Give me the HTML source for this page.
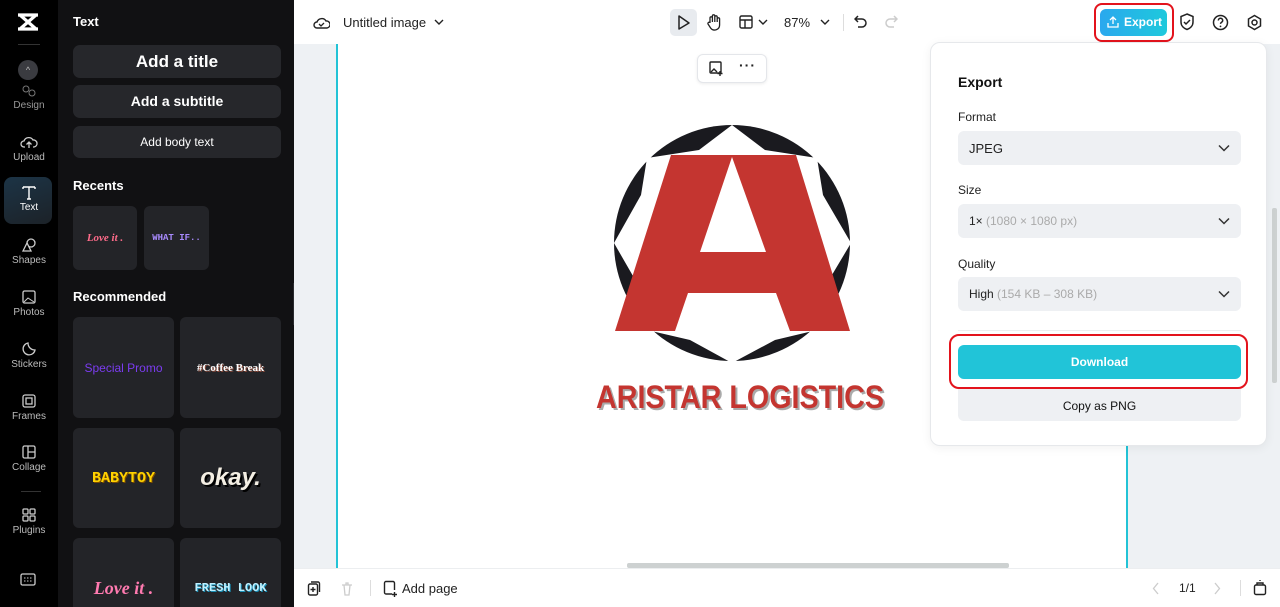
<!DOCTYPE html>
<html><head><meta charset="utf-8"><style>
*{box-sizing:border-box;margin:0;padding:0}
html,body{width:1280px;height:607px;overflow:hidden}
body{font-family:"Liberation Sans",sans-serif;background:#fff;position:relative}
.abs{position:absolute}
.rail{left:0;top:0;width:58px;height:607px;background:#000}
.ri{position:absolute;left:0;width:58px;text-align:center;color:#bbb;font-size:10px}
.ri svg{display:block;margin:0 auto 2px}
.panel{left:58px;top:0;width:236px;height:607px;background:#111113;overflow:hidden}
.btn{position:absolute;left:15px;width:208px;background:#26272b;border-radius:7px;color:#fff;text-align:center;font-weight:bold}
.card{position:absolute;background:#232428;border-radius:6px;display:flex;align-items:center;justify-content:center}
.h{position:absolute;left:15px;color:#fff;font-weight:bold;font-size:13px}
.canvas{left:294px;top:44px;width:986px;height:524px;background:#eef1f4}
.page{left:336px;top:44px;width:792px;height:524px;background:#fff;border-left:2px solid #22c3d6;border-right:2px solid #22c3d6}
.sel{background:#eef0f3;border-radius:6px;height:36px;display:flex;align-items:center;padding:0 11px;font-size:13px;color:#222;position:absolute;left:27px;width:283px;justify-content:space-between}
.lab{position:absolute;left:27px;font-size:12px;color:#222}
.g{color:#aaa}
</style></head><body>
<div class="abs rail">
 <svg class="abs" style="left:16px;top:12px" width="24" height="20" viewBox="0 0 24 20"><path d="M2 3h20M2 17h20M4 3l16 14M20 3L4 17" stroke="#fff" stroke-width="3.2" fill="none"/></svg>
 <div class="abs" style="left:18px;top:44px;width:22px;height:1px;background:#333"></div>
 <div class="abs" style="left:18px;top:60px;width:20px;height:20px;border-radius:50%;background:#3a3b40;color:#bbb;font-size:9px;text-align:center;line-height:20px">^</div>
 <div class="ri" style="top:84px"><svg width="16" height="14"><circle cx="5" cy="5" r="3" stroke="#777" fill="none"/><circle cx="11" cy="9" r="3" stroke="#777" fill="none"/></svg><span style="color:#999">Design</span></div>
 <div class="ri" style="top:134px"><svg width="18" height="16" viewBox="0 0 18 16"><path d="M5 13H4a3 3 0 010-6 5 5 0 019-1 3.5 3.5 0 011 7h-1M9 14V8M6.5 10.5L9 8l2.5 2.5" stroke="#ccc" stroke-width="1.3" fill="none"/></svg>Upload</div>
 <div class="abs" style="left:4px;top:177px;width:48px;height:47px;border-radius:8px;background:linear-gradient(160deg,#1c3446,#1c2228)"></div>
 <div class="ri" style="top:184px;color:#fff"><svg width="16" height="16" viewBox="0 0 16 16"><path d="M2 3h12M8 3v12M2 3v2M14 3v2M6 15h4" stroke="#fff" stroke-width="1.4" fill="none"/></svg>Text</div>
 <div class="ri" style="top:237px"><svg width="16" height="16"><circle cx="10" cy="6" r="4" stroke="#ccc" fill="none" stroke-width="1.3"/><path d="M2 14L6 6l4 8z" stroke="#ccc" fill="#000" stroke-width="1.3"/></svg>Shapes</div>
 <div class="ri" style="top:289px"><svg width="16" height="16"><rect x="2" y="2" width="12" height="12" rx="1.5" stroke="#ccc" fill="none" stroke-width="1.3"/><path d="M3 13l4-4 6 4" stroke="#ccc" fill="none"/></svg>Photos</div>
 <div class="ri" style="top:341px"><svg width="16" height="16"><path d="M14 9A6 6 0 117 2c0 4 3 7 7 7z" stroke="#ccc" fill="none" stroke-width="1.3"/></svg>Stickers</div>
 <div class="ri" style="top:393px"><svg width="16" height="16"><rect x="2" y="2" width="12" height="12" rx="2" stroke="#ccc" fill="none" stroke-width="1.3"/><rect x="5" y="5" width="6" height="6" stroke="#ccc" fill="none" stroke-width="1.3"/></svg>Frames</div>
 <div class="ri" style="top:444px"><svg width="16" height="16"><rect x="2" y="2" width="12" height="12" rx="1.5" stroke="#ccc" fill="none" stroke-width="1.3"/><path d="M7 2v12M7 8h7" stroke="#ccc" stroke-width="1.3"/></svg>Collage</div>
 <div class="abs" style="left:21px;top:491px;width:20px;height:1px;background:#333"></div>
 <div class="ri" style="top:507px"><svg width="16" height="16"><rect x="2" y="2" width="5" height="5" rx="1" stroke="#ccc" fill="none" stroke-width="1.3"/><rect x="9" y="2" width="5" height="5" rx="1" stroke="#ccc" fill="none" stroke-width="1.3"/><rect x="2" y="9" width="5" height="5" rx="1" stroke="#ccc" fill="none" stroke-width="1.3"/><rect x="9" y="9" width="5" height="5" rx="1" stroke="#ccc" fill="none" stroke-width="1.3"/></svg>Plugins</div>
 <svg class="abs" style="left:20px;top:573px" width="16" height="14"><rect x="1" y="1" width="14" height="11" rx="1.5" stroke="#ccc" fill="none" stroke-width="1.3"/><path d="M4 5h8M4 8h8" stroke="#ccc" stroke-dasharray="1.5 1.5"/></svg>
</div>
<div class="abs panel">
 <div class="h" style="top:14px">Text</div>
 <div class="btn" style="top:45px;height:33px;line-height:33px;font-size:17px">Add a title</div>
 <div class="btn" style="top:85px;height:33px;line-height:33px;font-size:14px">Add a subtitle</div>
 <div class="btn" style="top:126px;height:32px;line-height:32px;font-size:12px;font-weight:normal">Add body text</div>
 <div class="h" style="top:178px">Recents</div>
 <div class="card" style="left:15px;top:206px;width:64px;height:64px;color:#ff6b8a;font:italic bold 11px 'Liberation Serif',serif">Love it .</div>
 <div class="card" style="left:86px;top:206px;width:65px;height:64px;color:#a98bff;font:bold 9px 'Liberation Mono',monospace">WHAT IF..</div>
 <div class="h" style="top:289px">Recommended</div>
 <div class="card" style="left:15px;top:317px;width:101px;height:101px;color:#7b3cf0;font-size:12px">Special Promo</div>
 <div class="card" style="left:122px;top:317px;width:101px;height:101px;color:#fff;font:bold 11px 'Liberation Serif',serif;text-shadow:1px 1px 0 #8a4a3a">#Coffee Break</div>
 <div class="card" style="left:15px;top:428px;width:101px;height:100px;color:#ffd200;font:bold 15px 'Liberation Mono',monospace;text-shadow:1px 1px 0 #7a4b00">BABYTOY</div>
 <div class="card" style="left:122px;top:428px;width:101px;height:100px;color:#f4efe4;font:italic bold 24px 'Liberation Sans',sans-serif;text-shadow:2px 2px 0 #000">okay.</div>
 <div class="card" style="left:15px;top:538px;width:101px;height:80px;color:#ff7ab0;font:italic bold 18px 'Liberation Serif',serif;padding-top:20px">Love it .</div>
 <div class="card" style="left:122px;top:538px;width:101px;height:80px;color:#bff0ff;font:bold 12px 'Liberation Mono',monospace;text-shadow:1px 1px 0 #1a8fb5;padding-top:20px">FRESH LOOK</div>
</div>
<div class="abs" style="left:293px;top:283px;width:6px;height:42px;background:#2a2b2f;border-radius:0 4px 4px 0"></div>
<!-- top bar -->
<svg class="abs" style="left:313px;top:14px" width="17" height="16" viewBox="0 0 17 16"><path d="M5 14H4a3 3 0 010-6 5 5 0 019-1 3.5 3.5 0 011 7H5z" stroke="#222" stroke-width="1.4" fill="none"/><path d="M6 10l2 2 3-3" stroke="#222" stroke-width="1.3" fill="none"/></svg>
<div class="abs" style="left:343px;top:15px;font-size:13px;color:#222">Untitled image</div>
<svg class="abs" style="left:434px;top:18px" width="10" height="8"><path d="M1 2l4 4 4-4" stroke="#222" stroke-width="1.4" fill="none"/></svg>
<div class="abs" style="left:670px;top:9px;width:27px;height:27px;background:#e8ebef;border-radius:5px"></div>
<svg class="abs" style="left:677px;top:14px" width="14" height="17"><path d="M2 2l10 7-10 6z" stroke="#222" stroke-width="1.5" fill="none" stroke-linejoin="round"/></svg>
<svg class="abs" style="left:706px;top:13px" width="16" height="18"><path d="M4 10V5a1.2 1.2 0 012.4 0V9V3a1.2 1.2 0 012.4 0v6V4a1.2 1.2 0 012.4 0v5-3a1.2 1.2 0 012.4 0v6a5 5 0 01-9 3L2 11a1.3 1.3 0 012-1.5z" stroke="#222" stroke-width="1.3" fill="none"/></svg>
<svg class="abs" style="left:739px;top:15px" width="14" height="14"><rect x="1" y="1" width="12" height="12" rx="1.5" stroke="#222" stroke-width="1.4" fill="none"/><path d="M1 5h12M6 5v8" stroke="#222" stroke-width="1.4"/></svg>
<svg class="abs" style="left:758px;top:18px" width="10" height="8"><path d="M1 2l4 4 4-4" stroke="#222" stroke-width="1.4" fill="none"/></svg>
<div class="abs" style="left:784px;top:15px;font-size:13px;color:#222">87%</div>
<svg class="abs" style="left:820px;top:18px" width="10" height="8"><path d="M1 2l4 4 4-4" stroke="#222" stroke-width="1.4" fill="none"/></svg>
<div class="abs" style="left:843px;top:14px;width:1px;height:17px;background:#ddd"></div>
<svg class="abs" style="left:854px;top:14px" width="14" height="16"><path d="M4 2L1 5l3 3M1 5h7a4 4 0 010 8H4" stroke="#222" stroke-width="1.5" fill="none"/></svg>
<svg class="abs" style="left:884px;top:14px" width="14" height="16"><path d="M10 2l3 3-3 3M13 5H6a4 4 0 000 8h4" stroke="#ccc" stroke-width="1.5" fill="none"/></svg>
<div class="abs" style="left:1094px;top:3px;width:80px;height:39px;border:2.5px solid #e3131c;border-radius:8px"></div>
<div class="abs" style="left:1100px;top:9px;width:67px;height:27px;border-radius:6px;background:linear-gradient(90deg,#2aa8ee,#1ec9dc);color:#fff;font-size:12px;font-weight:bold;line-height:27px;padding-left:24px">Export</div>
<svg class="abs" style="left:1107px;top:16px" width="12" height="12"><path d="M6 8V1M3 4l3-3 3 3M1 7v4h10V7" stroke="#fff" stroke-width="1.3" fill="none"/></svg>
<svg class="abs" style="left:1179px;top:13px" width="16" height="18"><path d="M8 1l6 2.5V9c0 4-3 6.5-6 7.5C5 15.5 2 13 2 9V3.5z" stroke="#222" stroke-width="1.5" fill="none"/><path d="M5 9l2 2 4-4" stroke="#222" stroke-width="1.5" fill="none"/></svg>
<svg class="abs" style="left:1212px;top:14px" width="17" height="17"><circle cx="8.5" cy="8.5" r="7" stroke="#222" stroke-width="1.5" fill="none"/><path d="M6.3 6.5a2.2 2.2 0 114 1.2c-.8.6-1.8 1-1.8 2.2" stroke="#222" stroke-width="1.5" fill="none"/><circle cx="8.5" cy="12.4" r=".9" fill="#222"/></svg>
<svg class="abs" style="left:1246px;top:14px" width="17" height="17"><path d="M8.5 1.5l6 3.5v7l-6 3.5-6-3.5V5z" stroke="#222" stroke-width="1.5" fill="none"/><circle cx="8.5" cy="8.5" r="2.5" stroke="#222" stroke-width="1.5" fill="none"/></svg>
<!-- canvas -->
<div class="abs canvas"></div>
<div class="abs page"></div>
<div class="abs" style="left:697px;top:54px;width:70px;height:29px;background:#fff;border:1px solid #e4e6ea;border-radius:6px;box-shadow:0 1px 3px rgba(0,0,0,.08)"></div>
<svg class="abs" style="left:709px;top:61px" width="15" height="15"><rect x="1" y="1" width="11" height="11" rx="1" stroke="#222" stroke-width="1.4" fill="none"/><path d="M2 11l3-3 3 3M11 10v5M8.5 12.5h5" stroke="#222" stroke-width="1.4" fill="none"/></svg>
<div class="abs" style="left:739px;top:57px;font-size:14px;font-weight:bold;color:#222;letter-spacing:1px">···</div>
<!-- logo -->
<svg class="abs" style="left:590px;top:115px" width="300" height="310" viewBox="590 115 300 310">
 <circle cx="732" cy="243" r="118" fill="#1a1a1f"/>
 <polygon fill="#fff" points="732,125 765,150 817,158 823,195 851,243 823,290 817,330 775,340 732,363 690,340 647,330 641,290 614,243 641,195 647,158 699,150"/>
 <polygon fill="#c43530" points="671,155 796,155 850,331 790,331 776,293 688,293 675,331 615,331"/>
 <polygon fill="#fff" points="732,157 766,252 700,252"/>
 <text x="598" y="410" textLength="288" lengthAdjust="spacingAndGlyphs" font-family="Liberation Sans" font-weight="bold" font-size="32" fill="#aaa">ARISTAR LOGISTICS</text>
 <text x="596" y="408" textLength="288" lengthAdjust="spacingAndGlyphs" font-family="Liberation Sans" font-weight="bold" font-size="32" fill="#c43530">ARISTAR LOGISTICS</text>
</svg>
<div class="abs" style="left:627px;top:563px;width:382px;height:5px;background:#cdd1d1;border-radius:2px"></div>
<div class="abs" style="left:1272px;top:208px;width:5px;height:175px;background:#cdd1d1;border-radius:2px"></div>
<!-- export panel -->
<div class="abs" style="left:930px;top:42px;width:337px;height:404px;background:#fff;border:1px solid #e6e8eb;border-radius:10px;box-shadow:0 2px 10px rgba(0,0,0,.06)">
 <div class="abs" style="left:27px;top:31px;font-size:14px;font-weight:bold;color:#111">Export</div>
 <div class="lab" style="top:67px">Format</div>
 <div class="sel" style="top:88px;height:34px"><span>JPEG</span><svg width="12" height="8"><path d="M1 1.5l5 5 5-5" stroke="#333" stroke-width="1.5" fill="none"/></svg></div>
 <div class="lab" style="top:140px">Size</div>
 <div class="sel" style="top:161px;height:34px;font-size:12px"><span>1× <span class="g">(1080 × 1080 px)</span></span><svg width="12" height="8"><path d="M1 1.5l5 5 5-5" stroke="#333" stroke-width="1.5" fill="none"/></svg></div>
 <div class="lab" style="top:214px">Quality</div>
 <div class="sel" style="top:234px;height:34px;font-size:12px"><span>High <span class="g">(154 KB – 308 KB)</span></span><svg width="12" height="8"><path d="M1 1.5l5 5 5-5" stroke="#333" stroke-width="1.5" fill="none"/></svg></div>
 <div class="abs" style="left:27px;top:287px;width:283px;height:1px;background:#eceef0"></div>
 <div class="abs" style="left:27px;top:345px;width:283px;height:33px;background:#eef0f3;border-radius:0 0 6px 6px;text-align:center;line-height:36px;font-size:12px;color:#111">Copy as PNG</div>
 <div class="abs" style="left:18px;top:291px;width:299px;height:55px;border:2.5px solid #e3131c;border-radius:10px;background:#fff"></div>
 <div class="abs" style="left:27px;top:302px;width:283px;height:34px;background:#21c4d8;border-radius:6px;text-align:center;line-height:34px;font-size:12px;font-weight:bold;color:#fff">Download</div>
</div>
<!-- bottom bar -->
<div class="abs" style="left:294px;top:568px;width:986px;height:39px;background:#fff;border-top:1px solid #eceef0"></div>
<svg class="abs" style="left:307px;top:580px" width="14" height="16"><rect x="1.5" y="4" width="9" height="11" rx="1.5" stroke="#222" stroke-width="1.4" fill="none"/><path d="M4 2h7a1.5 1.5 0 011.5 1.5V12M6 7v5M3.5 9.5h5" stroke="#222" stroke-width="1.4" fill="none"/></svg>
<svg class="abs" style="left:341px;top:581px" width="12" height="15"><path d="M1 4h10M3 4l1 10h4l1-10M5 4V2h2v2" stroke="#ccc" stroke-width="1.3" fill="none"/></svg>
<div class="abs" style="left:370px;top:580px;width:1px;height:16px;background:#ddd"></div>
<svg class="abs" style="left:383px;top:580px" width="15" height="17"><path d="M9 14H3a1.5 1.5 0 01-1.5-1.5V3A1.5 1.5 0 013 1.5h7A1.5 1.5 0 0111.5 3v7M11.5 12v5M9 14.5h5" stroke="#222" stroke-width="1.4" fill="none"/></svg>
<div class="abs" style="left:402px;top:581px;font-size:13px;color:#222">Add page</div>
<svg class="abs" style="left:1152px;top:582px" width="8" height="13"><path d="M6 1L1.5 6.5 6 12" stroke="#ccc" stroke-width="1.3" fill="none"/></svg>
<div class="abs" style="left:1179px;top:581px;font-size:12px;color:#222">1/1</div>
<svg class="abs" style="left:1213px;top:582px" width="8" height="13"><path d="M2 1l4.5 5.5L2 12" stroke="#ccc" stroke-width="1.3" fill="none"/></svg>
<div class="abs" style="left:1240px;top:580px;width:1px;height:16px;background:#ddd"></div>
<svg class="abs" style="left:1253px;top:579px" width="14" height="17"><rect x="1.5" y="6" width="11" height="9.5" rx="1.5" stroke="#222" stroke-width="1.4" fill="none"/><path d="M4 6V4h6v2M7 1v1" stroke="#222" stroke-width="1.4" fill="none"/></svg>
</body></html>
